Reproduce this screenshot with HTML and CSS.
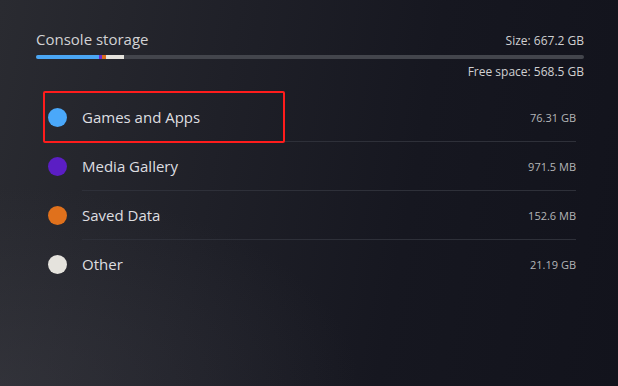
FILE: index.html
```html
<!DOCTYPE html>
<html>
<head>
<meta charset="utf-8">
<link rel="stylesheet" href="styles.css">
</head>
<body>
<div class="screen">
  <div class="head">
    <div class="title">Console storage</div>
    <div class="size">Size: 667.2 GB</div>
  </div>
  <div class="bar">
    <span class="seg seg-games" style="width:63px"></span>
    <span class="seg seg-media" style="width:3px"></span>
    <span class="seg seg-saved" style="width:4px"></span>
    <span class="seg seg-other" style="width:18px"></span>
  </div>
  <div class="free">Free space: 568.5 GB</div>
  <ul class="list">
    <li class="row">
      <span class="dot dot-games"></span>
      <div class="row-main"><span class="label">Games and Apps</span><span class="value">76.31 GB</span></div>
      <span class="highlight"></span>
    </li>
    <li class="row">
      <span class="dot dot-media"></span>
      <div class="row-main"><span class="label">Media Gallery</span><span class="value">971.5 MB</span></div>
    </li>
    <li class="row">
      <span class="dot dot-saved"></span>
      <div class="row-main"><span class="label">Saved Data</span><span class="value">152.6 MB</span></div>
    </li>
    <li class="row">
      <span class="dot dot-other"></span>
      <div class="row-main last"><span class="label">Other</span><span class="value">21.19 GB</span></div>
    </li>
  </ul>
</div>
</body>
</html>
```

FILE: styles.css
```css
html, body {
  margin: 0;
  padding: 0;
  width: 618px;
  height: 386px;
  overflow: hidden;
}
body {
  font-family: "Open Sans", "Noto Sans", sans-serif;
  background:
    radial-gradient(ellipse 360px 200px at 0% 100%, rgba(70,70,78,0.35), rgba(70,70,78,0) 100%),
    linear-gradient(100deg, #2a2b31 0%, #1f2028 35%, #161720 65%, #12131c 100%);
  color: #e2e2e2;
}
.screen {
  padding: 29px 34px 0 36px;
}
.head {
  display: flex;
  justify-content: space-between;
  align-items: baseline;
}
.title {
  font-size: 15px;
  line-height: 20px;
  color: #d2d2d4;
}
.size {
  font-size: 12px;
  line-height: 16px;
  color: #d0d0d2;
}
.bar {
  margin-top: 6px;
  height: 4px;
  background: #43454c;
  border-radius: 2px;
  display: flex;
  overflow: hidden;
}
.seg { display: block; height: 100%; }
.seg-games { background: #4aa6f4; }
.seg-media { background: #6a2bd0; }
.seg-saved { background: #d86c1e; }
.seg-other { background: #e4e2dc; }
.free {
  margin-top: 5px;
  text-align: right;
  font-size: 12px;
  line-height: 16px;
  color: #d0d0d2;
}
.list {
  list-style: none;
  margin: 13px 8px 0 0;
  padding: 0;
}
.row {
  position: relative;
  display: flex;
  align-items: stretch;
  height: 49px;
  padding-left: 12px;
}
.dot {
  flex: none;
  width: 19px;
  height: 19px;
  border-radius: 50%;
  align-self: center;
  margin-right: 15px;
}
.dot-games { background: #4aa8fa; }
.dot-media { background: #5b1ec4; }
.dot-saved { background: #e0711c; }
.dot-other { background: #e5e3dd; }
.row-main {
  flex: 1;
  display: flex;
  justify-content: space-between;
  align-items: center;
  border-bottom: 1px solid #2e3039;
}
.row-main.last { border-bottom-color: transparent; }
.label {
  font-size: 15px;
  color: #dedee0;
}
.value {
  font-size: 11px;
  color: #b4b5b8;
}
.highlight {
  position: absolute;
  left: 7px;
  top: -2px;
  width: 238px;
  height: 48px;
  border: 2px solid #ff1c1c;
  border-radius: 2px;
}
```
